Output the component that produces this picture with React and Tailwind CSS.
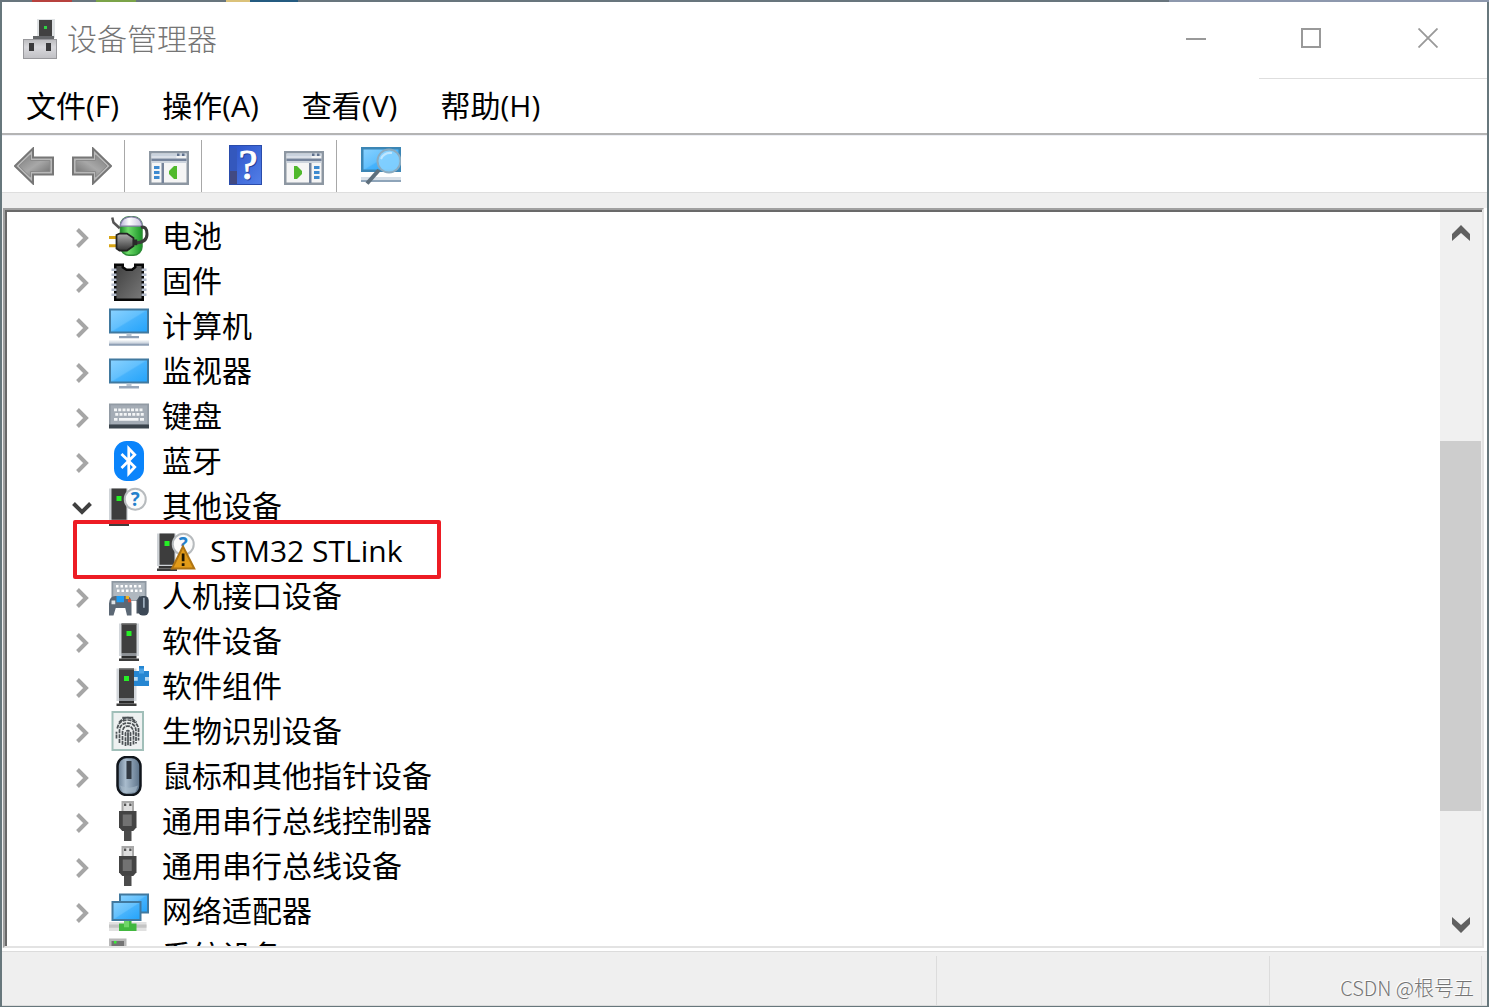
import React from "react";

const R = ({ x, y, w, h, f, ...rest }) => <rect x={x} y={y} width={w} height={h} fill={f} {...rest} />;

function Icon({ children }) {
  return (
    <svg viewBox="0 0 16 16" className="size-10 shrink-0" aria-hidden="true">
      {children}
    </svg>
  );
}

function Gradients() {
  return (
    <svg className="absolute size-0" aria-hidden="true">
      <defs>
        <linearGradient id="screen" x1="0" y1="0" x2="1" y2="1">
          <stop offset="0" stopColor="#8ad2ff" />
          <stop offset="0.48" stopColor="#62c0fd" />
          <stop offset="0.52" stopColor="#47b3fc" />
          <stop offset="1" stopColor="#22a3fb" />
        </linearGradient>
        <linearGradient id="chip" x1="0" y1="0" x2="1" y2="1">
          <stop offset="0" stopColor="#3e3e3e" />
          <stop offset="1" stopColor="#7a7a7a" />
        </linearGradient>
        <linearGradient id="shade" x1="0" y1="0" x2="0" y2="1">
          <stop offset="0" stopColor="#f4f6f8" />
          <stop offset="1" stopColor="#8b9fb5" />
        </linearGradient>
        <linearGradient id="green" x1="0" y1="0" x2="1" y2="0">
          <stop offset="0" stopColor="#1f8a2b" />
          <stop offset="0.35" stopColor="#6fdc6a" />
          <stop offset="1" stopColor="#1a9427" />
        </linearGradient>
        <linearGradient id="cap" x1="0" y1="0" x2="1" y2="0">
          <stop offset="0" stopColor="#b9b4d8" />
          <stop offset="0.4" stopColor="#ffffff" />
          <stop offset="1" stopColor="#c5c0dc" />
        </linearGradient>
        <linearGradient id="arrow" x1="0" y1="0" x2="1" y2="1">
          <stop offset="0" stopColor="#7d7d7d" />
          <stop offset="0.5" stopColor="#a8a8a8" />
          <stop offset="1" stopColor="#6a6a6a" />
        </linearGradient>
        <linearGradient id="mouse" x1="0" y1="0" x2="1" y2="0">
          <stop offset="0" stopColor="#64798e" />
          <stop offset="0.35" stopColor="#a9bccd" />
          <stop offset="1" stopColor="#586e85" />
        </linearGradient>
        <linearGradient id="metal" x1="0" y1="0" x2="0" y2="1">
          <stop offset="0" stopColor="#bcbcbf" />
          <stop offset="0.4" stopColor="#d8d8dc" />
          <stop offset="1" stopColor="#c0c0c4" />
        </linearGradient>
        <linearGradient id="book" x1="0" y1="0" x2="1" y2="1">
          <stop offset="0" stopColor="#2b52c8" />
          <stop offset="1" stopColor="#527fe8" />
        </linearGradient>
        <linearGradient id="plug" x1="0" y1="0" x2="0" y2="1">
          <stop offset="0" stopColor="#b0b0b0" />
          <stop offset="1" stopColor="#363636" />
        </linearGradient>
      </defs>
    </svg>
  );
}

const Tower = ({ x = 4 }) => (
  <g>
    <R x={x} y={1} w={8} h={13} f="#d3d7db" />
    <R x={x + 1} y={1} w={6} h={12} f="#3f3f3f" />
    <R x={x + 1} y={1} w={6} h={0.5} f="#6c6c6c" />
    <R x={x + 3} y={4} w={2} h={2} f="#26f026" />
    <R x={x + 1} y={13} w={6} h={1} f="#8d9196" />
    <R x={x + 1} y={14} w={6} h={1} f="#2b2b2b" />
    <R x={x} y={15} w={8} h={1} f="#3b3b3b" />
  </g>
);

const Screen = ({ x = 0, y, w = 16, h = 10 }) => (
  <R x={x + 0.4} y={y + 0.4} w={w - 0.8} h={h - 0.8} f="url(#screen)" stroke="#41799f" strokeWidth="0.8" />
);

const Battery = () => (
  <Icon>
    <rect x="4.6" y="0.3" width="8.6" height="15.4" rx="3.4" fill="url(#green)" stroke="#2c8a35" strokeWidth="0.6" />
    <path d="M4.6 4V3.3Q5.3 .3 8.9 .3T13.2 3.3V4Z" fill="url(#cap)" stroke="#857da6" strokeWidth="0.5" />
    <path d="M1.3 .6L1.8 2.6 4.3 4.9" fill="none" stroke="#555" strokeWidth="1" />
    <path d="M10.5 10.8Q15.3 10.6 15.2 7.2T12.8 4.6" fill="none" stroke="#3b3b3b" strokeWidth="1.2" />
    <R x={0} y={8} w={3} h={1.2} f="#d9a514" />
    <R x={0} y={11.3} w={3} h={1.2} f="#d9a514" />
    <path d="M3 7.6L4.2 7H7.2L9.8 8.8V12L7.2 13.8H4.2L3 13Z" fill="url(#plug)" stroke="#222" strokeWidth="0.7" />
    <R x={9.5} y={9.4} w={1.8} h={2.3} f="#292929" />
  </Icon>
);

const Firmware = () => (
  <Icon>
    <path d="M2.5 1.5H5.5V2.5L7 3.5H9.2L10.5 2.5V1.5H13.5V15.5H2.5Z" fill="url(#chip)" stroke="#080808" strokeWidth="1" />
    {[3, 5, 7, 9, 11, 13].map((y) => (
      <g key={y}>
        <R x={1} y={y} w={2} h={1} f="#b4bccb" />
        <R x={13} y={y} w={2} h={1} f="#b4bccb" />
      </g>
    ))}
  </Icon>
);

const Computer = () => (
  <Icon>
    <Screen y={1} />
    <R x={7} y={11} w={2} h={1} f="#b8c3d0" />
    <R x={4} y={12} w={8} h={0.9} f="#8fa0b5" />
    <R x={0} y={13.6} w={16} h={1.4} f="url(#shade)" opacity="0.5" />
    <R x={0} y={15} w={16} h={0.9} f="#8fa0b5" />
  </Icon>
);

const Monitor = () => (
  <Icon>
    <Screen y={3} />
    <R x={7} y={13} w={2} h={1} f="#b8c3d0" />
    <R x={4} y={14} w={8} h={1} f="#98a7ba" />
  </Icon>
);

const Keyboard = () => (
  <Icon>
    <R x={0} y={3} w={16} h={8.6} f="#929ba4" />
    <R x={0.7} y={3.7} w={14.6} h={7.6} f="#a4acb5" />
    {[5, 6.8].map((y, r) =>
      [2, 3.7, 5.4, 7.1, 8.8, 10.5, 12.2].map((x) => <R key={x + "-" + y} x={x + r * 0.5} y={y} w={1.2} h={1.1} f="#f3f5f6" />)
    )}
    <R x={2} y={8.8} w={1.4} h={1.1} f="#f3f5f6" />
    <R x={4} y={8.8} w={7.8} h={1.1} f="#f3f5f6" />
    <R x={12.4} y={8.8} w={1.6} h={1.1} f="#f3f5f6" />
    <R x={0} y={11.4} w={16} h={1.6} f="#3b444c" />
  </Icon>
);

const Bluetooth = () => (
  <Icon>
    <rect x="2" y="0" width="12" height="16" rx="5" fill="#0a84fb" />
    <path d="M5 5.2L10.3 10.4 7.9 13V3L10.3 5.5 5 10.8" fill="none" stroke="#fff" strokeWidth="1.1" />
  </Icon>
);

const Question = ({ x = 10.5 }) => (
  <g>
    <circle cx={x} cy="5.3" r="4.2" fill="#fbfbfb" stroke="#b7bbbe" strokeWidth="0.8" />
    <text x={x} y="8.1" textAnchor="middle" fontSize="7.5" fontWeight="700" fontFamily="Open Sans, sans-serif" fill="#2380cc">?</text>
  </g>
);

const OtherTower = () => (
  <g>
    <R x={0} y={1} w={7.5} h={13} f="#cfd3d7" />
    <R x={1} y={1} w={6} h={12.5} f="#3d3d3d" />
    <R x={3} y={4} w={2} h={2} f="#26f026" />
    <R x={0.7} y={14} w={6.3} h={1} f="#343434" />
    <R x={0} y={15} w={8} h={1} f="#3d3d3d" />
  </g>
);

const Other = () => (
  <Icon>
    <OtherTower />
    <Question />
  </Icon>
);

const OtherWarning = () => (
  <Icon>
    <OtherTower />
    <Question />
    <path d="M10.4 6.2L14.9 15H6Z" fill="#e29b18" stroke="#af7413" strokeWidth="0.8" />
    <R x={9.9} y={9} w={1.1} h={3.1} f="#211600" />
    <R x={9.9} y={12.9} w={1.1} h={1.1} f="#211600" />
  </Icon>
);

const Hid = () => (
  <Icon>
    <R x={1} y={2} w={14} h={8} f="#8e98a2" />
    <R x={1.7} y={2.7} w={12.6} h={7} f="#b0b8c0" />
    {[3.6, 5.4].map((y, r) =>
      [2.8, 4.6, 6.4, 8.2, 10, 11.8].map((x) => <R key={x + "-" + y} x={x + r * 0.4} y={y} w={1} h={1} f="#fff" />)
    )}
    <path d="M0 15.8V11Q.2 8 2.5 8H7Q9 8 9 11V15.8H7.2L6.5 12.8H2.7L1.8 15.8Z" fill="#5c6875" />
    <R x={3} y={8} w={3} h={2.5} f="#1c9df6" />
    <R x={6.7} y={8} w={1.3} h={1.2} f="#f0b520" />
    <R x={7.6} y={9.3} w={1.2} h={1.2} f="#e34a31" />
    <R x={1} y={9.8} w={1.5} h={1.5} f="#dfe3e6" />
    <path d="M11 15V9.8L12.4 7.8 13.1 10V15Z" fill="#4b5560" />
    <rect x="11.7" y="8" width="4.2" height="7.8" rx="1.8" fill="#3c4856" />
    <R x={13.6} y={8.7} w={0.7} h={4} f="#9aabba" />
  </Icon>
);

const Software = () => (
  <Icon>
    <Tower />
  </Icon>
);

const Component = () => (
  <Icon>
    <Tower x={3} />
    <path d="M10 2H12V0H14V2H16V8H10Z" fill="#2586d2" />
    <R x={10} y={4.4} w={1.5} h={1.5} f="#b8daf2" />
    <R x={14.4} y={4.4} w={1.6} h={1.5} f="#b8daf2" />
    <R x={12} y={1} w={2} h={2} f="#4ba3e6" />
  </Icon>
);

const Fingerprint = () => (
  <Icon>
    <R x={1.4} y={0.4} w={12.2} h={15.2} f="#eef1f1" stroke="#a1bfb9" strokeWidth="0.8" />
    <g fill="none" stroke="#4d5256" strokeWidth="0.7">
      <path d="M4 4.6Q7.5 .7 11 4.6M3.3 7Q4 3.5 7.5 3.6T11.8 7V11.8M3 11V8.3M4.2 12.8V8Q4.4 4.8 7.5 4.8T10.8 8V13M5.4 13.5V8.4Q5.6 6 7.5 6T9.8 8.4V13.5M6.6 14V8.8Q7.5 6.8 8.6 8.8V14" strokeDasharray="1.6 0.35" />
      <path d="M7.6 8.5V13.7M5.3 2.6H9.7" />
    </g>
  </Icon>
);

const Mouse = () => (
  <Icon>
    <rect x="3.4" y="0.4" width="9.2" height="15.2" rx="3.6" fill="url(#mouse)" stroke="#10151b" strokeWidth="1" />
    <path d="M4.4 11.8Q8 13.5 11.6 11.8L10.5 14.5H5.5Z" fill="#a8bac9" opacity="0.6" />
    <R x={7} y={2} w={2} h={7.2} f="#323a43" />
  </Icon>
);

const Usb = () => (
  <Icon>
    <R x={5} y={0} w={5} h={4.4} f="#a9a9a9" />
    <R x={5.8} y={0.8} w={3.4} h={3.4} f="#dedede" />
    <R x={6} y={1} w={0.9} h={1} f="#555" />
    <R x={8.1} y={1} w={0.9} h={1} f="#555" />
    <path d="M4 4H11V10.5L9.7 12H5.3L4 10.5Z" fill="#444" />
    <R x={5.5} y={5.4} w={3.6} h={4.6} f="#727272" />
    <R x={6} y={11.8} w={3} h={4.2} f="#4b4b4b" />
  </Icon>
);

const Network = () => (
  <Icon>
    <Screen x={4} y={1} w={12} h={8} />
    <Screen x={1} y={4} w={12} h={8} />
    <R x={0} y={12.4} w={15} h={3.6} f="#e1e1e1" />
    <R x={0} y={13.4} w={15} h={1.3} f="#c4c4c4" />
    <path d="M6 12H9V13H11V16H4V13H6Z" fill="#42b83f" />
    <R x={6} y={12} w={2} h={2.5} f="#6fd668" />
  </Icon>
);

const SystemDevice = () => (
  <Icon>
    <R x={0.5} y={1.5} w={6} h={14} f="#747474" stroke="#b8b8b8" />
    <R x={2} y={2} w={1} h={1} f="#37ee37" />
  </Icon>
);

const devices = [
  ["电池", Battery],
  ["固件", Firmware],
  ["计算机", Computer],
  ["监视器", Monitor],
  ["键盘", Keyboard],
  ["蓝牙", Bluetooth],
  ["其他设备", Other, "STM32 STLink"],
  ["人机接口设备", Hid],
  ["软件设备", Software],
  ["软件组件", Component],
  ["生物识别设备", Fingerprint],
  ["鼠标和其他指针设备", Mouse],
  ["通用串行总线控制器", Usb],
  ["通用串行总线设备", Usb],
  ["网络适配器", Network],
  ["系统设备", SystemDevice],
];

function Chevron({ open }) {
  return (
    <svg viewBox="0 0 24 24" className="size-6" fill="none" strokeWidth="4" aria-hidden="true">
      {open ? <path d="M3.5 7.5L12 16 20.5 7.5" stroke="#404040" /> : <path d="M7.5 3.5L16 12 7.5 20.5" stroke="#a6a6a6" />}
    </svg>
  );
}

function TreeRow({ label, Glyph, child }) {
  return (
    <li>
      <div className="flex h-[45px] items-center pl-[63px]">
        <button className="mt-1 mr-[15px]" aria-label={label} aria-expanded={Boolean(child)}>
          <Chevron open={Boolean(child)} />
        </button>
        <Glyph />
        <span className="ml-[13px] whitespace-nowrap">{label}</span>
      </div>
      {child && (
        <ul>
          <li className="relative flex h-[45px] items-center pl-[150px]">
            <OtherWarning />
            <span className="ml-[13px] whitespace-nowrap">{child}</span>
            <div className="pointer-events-none absolute -top-2 left-[66px] h-[59px] w-[368px] rounded-xs border-4 border-[#ed1c24]" />
          </li>
        </ul>
      )}
    </li>
  );
}

const Arrow = ({ flip }) => (
  <svg viewBox="0 0 40 38" className={flip ? "h-[38px] w-10 -scale-x-100" : "h-[38px] w-10"} aria-hidden="true">
    <path d="M1 19L19 1.5V10.5H39V27.5H19V36.5Z" fill="#b9b9b9" stroke="#777" strokeWidth="2" />
    <path d="M5 19L16.5 8V13.5H36V24.5H16.5V30Z" fill="url(#arrow)" stroke="#8a8a8a" strokeWidth="1" />
  </svg>
);

function PanelIcon({ right }) {
  return (
    <svg viewBox="0 0 40 34" className="h-[34px] w-10" aria-hidden="true">
      <R x={1.25} y={1.25} w={37.5} h={31.5} f="#f5f5f5" stroke="#8d97a2" strokeWidth="2.5" />
      <R x={2.5} y={2.5} w={35} h={2.5} f="#c9d2dd" />
      <R x={2.5} y={5} w={25} h={2.5} f="#dbe0e8" />
      <R x={28} y={2.5} w={2.5} h={2.5} f="#60718c" />
      <R x={33} y={2.5} w={2.5} h={2.5} f="#60718c" />
      <R x={2.5} y={7.5} w={35} h={2.5} f="#75839a" />
      <R x={2.5} y={10} w={35} h={2} f="#cdd4dd" />
      <R x={right ? 25 : 12.5} y={12} w={2.5} h={20} f="#75839a" />
      {[15, 20, 25].map((y) => (
        <R key={y} x={right ? 30 : 5} y={y} w={5.5} h={3} f="#3d8ad0" />
      ))}
      <path d={right ? "M10 15H13L18 20V23L13 28H10Z" : "M28 15H25L20 20V23L25 28H28Z"} fill="#50b92c" />
    </svg>
  );
}

const HelpIcon = () => (
  <svg viewBox="0 0 33 40" className="h-10 w-[33px] overflow-visible" aria-hidden="true">
    <R x={0.5} y={0.5} w={32} h={39} f="url(#book)" stroke="#2a4cab" />
    <R x={1} y={3} w={7} h={36} f="#3458bd" />
    <R x={1} y={26} w={7} h={13} f="#424a82" />
    <text x="20" y="35" textAnchor="middle" fontSize="42" fontFamily="Liberation Serif, serif" fill="#27419a" stroke="#27419a">?</text>
    <text x="19" y="34" textAnchor="middle" fontSize="42" fontFamily="Liberation Serif, serif" fill="#fff" stroke="#fff">?</text>
  </svg>
);

const ScanIcon = () => (
  <svg viewBox="0 0 40 38" className="h-[38px] w-10" aria-hidden="true">
    <R x={1.25} y={1.25} w={37.5} h={22.5} f="url(#screen)" stroke="#3c86b5" strokeWidth="2.5" />
    <R x={0} y={30} w={40} h={3} f="#d7dfe7" />
    <R x={0} y={33} w={40} h={2} f="#8ea4b9" />
    <path d="M18 23L6 36.5" stroke="#5e6f7c" strokeWidth="4" />
    <circle cx="28" cy="14" r="11.5" fill="#8bd3ff" fillOpacity="0.85" stroke="#8babc0" strokeWidth="2" />
    <path d="M20 12Q23 5 31 6" fill="none" stroke="#bfe6ff" strokeWidth="2" />
  </svg>
);

const TitleIcon = () => (
  <svg viewBox="0 0 34 40" className="h-10 w-[34px]" aria-hidden="true">
    <R x={14} y={0} w={18} h={19} f="#dfe2e4" />
    <R x={16} y={1} w={13} h={17} f="#414141" />
    <R x={21} y={7} w={3} h={3} f="#30d443" />
    <R x={10} y={17} w={21} h={3} f="#65676a" />
    <R x={0.5} y={20.5} w={33} h={19} f="url(#metal)" stroke="#98989c" />
    <R x={6} y={24} w={5} h={8} f="#39393b" />
    <R x={23} y={24} w={5} h={8} f="#39393b" />
  </svg>
);

const ToolSeparator = ({ className }) => <div className={"w-px self-stretch bg-[#a8a8a8] " + className} />;

const ScrollArrow = ({ down }) => (
  <svg viewBox="0 0 18 16" className={down ? "h-4 w-[18px] rotate-180" : "h-4 w-[18px]"} aria-hidden="true">
    <path d="M9 0L18 9V16L9 8 0 16V9Z" fill="#606060" />
  </svg>
);

export default function App() {
  return (
    <div className="flex h-screen flex-col bg-[#67777c] font-['Open_Sans','Noto_Sans_CJK_SC',sans-serif] text-[30px] leading-10 text-black">
      <Gradients />
      <div className="flex h-0.5 shrink-0 bg-[#68757d]">
        <div className="ml-8 w-10 bg-[#b7413e]" />
        <div className="ml-6 w-10 bg-[#7ba348]" />
        <div className="ml-[90px] w-6 bg-[#dbc27a]" />
        <div className="w-12 bg-[#245b80]" />
        <div className="ml-auto w-80 bg-[#8d98ad]" />
      </div>
      <div className="mx-0.5 mb-px flex min-h-0 flex-1 flex-col bg-[#efefef]">
        <header className="flex h-[77px] shrink-0 bg-white">
          <div className="flex flex-1 items-center gap-2.5 pb-1 pl-[21px]">
            <TitleIcon />
            <h1 className="font-light text-[#757575]">设备管理器</h1>
          </div>
          <div className="flex text-[#999]">
            <button className="flex w-[126px] items-center justify-center pb-1" aria-label="最小化">
              <svg viewBox="0 0 20 20" className="size-5" aria-hidden="true"><R x={0} y={9} w={20} h={2} f="currentColor" /></svg>
            </button>
            <button className="flex w-[110px] items-center justify-center border-b border-[#dedede] pr-1.5 pb-1" aria-label="最大化">
              <svg viewBox="0 0 20 20" className="size-5" fill="none" stroke="currentColor" strokeWidth="2" aria-hidden="true"><rect x="1" y="1" width="18" height="18" /></svg>
            </button>
            <button className="flex w-[118px] items-center justify-center border-b border-[#dedede] pb-1" aria-label="关闭">
              <svg viewBox="0 0 20 20" className="size-5" stroke="currentColor" strokeWidth="1.8" aria-hidden="true"><path d="M.5 .5L19.5 19.5M19.5 .5L.5 19.5" /></svg>
            </button>
          </div>
        </header>

        <nav className="flex h-[56px] shrink-0 items-center gap-[43px] border-b-2 border-[#b4b4b4] bg-white pl-6">
          <button>文件(F)</button>
          <button>操作(A)</button>
          <button>查看(V)</button>
          <button>帮助(H)</button>
        </nav>

        <div className="flex h-[58px] shrink-0 items-center border-y border-t-[#eef0f6] border-b-[#dedede] bg-white pt-1 pl-3">
          <button aria-label="后退"><Arrow /></button>
          <button className="ml-[18px]" aria-label="前进"><Arrow flip /></button>
          <ToolSeparator className="ml-3" />
          <button className="ml-6 pt-1" aria-label="显示/隐藏控制台树"><PanelIcon /></button>
          <ToolSeparator className="ml-3" />
          <button className="ml-[27px] pb-0.5" aria-label="帮助"><HelpIcon /></button>
          <button className="ml-[22px] pt-1" aria-label="显示/隐藏操作窗格"><PanelIcon right /></button>
          <ToolSeparator className="ml-3" />
          <button className="ml-6" aria-label="扫描检测硬件改动"><ScanIcon /></button>
        </div>

        <main className="mt-[15px] flex min-h-0 flex-1 border-r-[3px] border-b-[3px] border-white pl-px">
          <div className="flex min-w-0 flex-1 border-2 border-t-[#a0a0a0] border-r-[#e3e3e3] border-b-[#e3e3e3] border-l-[#a0a0a0]">
            <div className="flex min-w-0 flex-1 border-t-2 border-l-2 border-[#696969] bg-white">
              <ul className="min-w-0 flex-1 overflow-hidden pt-px">
                {devices.map(([label, Glyph, child]) => (
                  <TreeRow key={label} label={label} Glyph={Glyph} child={child} />
                ))}
              </ul>
              <div className="flex w-[42px] flex-col items-center bg-[#f0f0f0]">
                <button className="flex h-[42px] w-full items-center justify-center" aria-label="向上滚动"><ScrollArrow /></button>
                <div className="flex w-full flex-1 flex-col pr-px">
                  <div className="grow-[187]" />
                  <div className="w-full grow-[370] bg-[#cdcdcd]" />
                  <div className="grow-[93]" />
                </div>
                <button className="flex h-[42px] w-full items-center justify-center" aria-label="向下滚动"><ScrollArrow down /></button>
              </div>
            </div>
          </div>
        </main>

        <footer className="flex h-[55px] shrink-0 items-stretch border-y border-[#dcdcdc] bg-[#efefef] pt-1 pr-[5px]">
          <div className="flex-1 border-r border-[#dcdcdc]" />
          <div className="w-[333px] border-r border-[#dcdcdc]" />
          <div className="flex w-[212px] items-end justify-end border-r border-[#dcdcdc] pr-[7px] pb-[3px]">
            <span className="font-['Noto_Sans_CJK_SC',sans-serif] text-xl leading-7 font-light whitespace-nowrap text-[#757575] [text-shadow:-1px_-1px_0_#fff]">CSDN @根号五</span>
          </div>
        </footer>
      </div>
    </div>
  );
}
